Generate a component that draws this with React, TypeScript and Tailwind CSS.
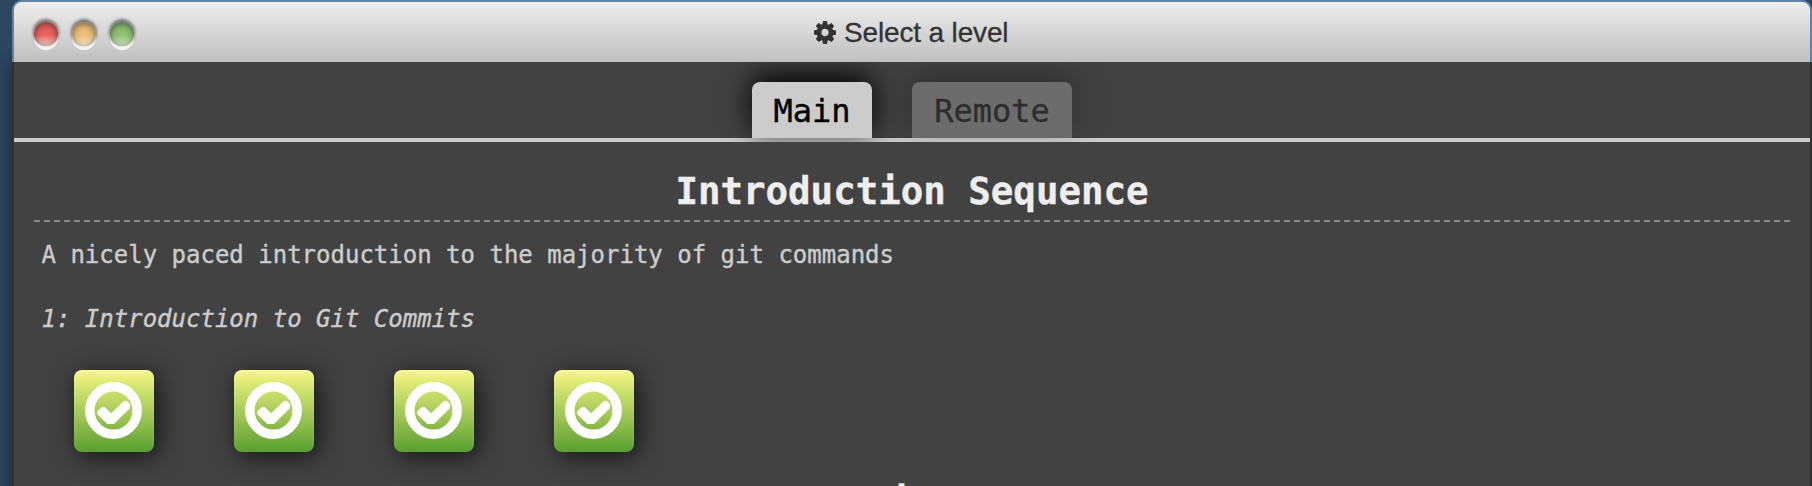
const levels = [1, 2, 3, 4];

function CogIcon() {
  return (
    <svg viewBox="128 128 1536 1536" className="mr-[8px] h-[23px] w-[22px] shrink-0 fill-[#333]" preserveAspectRatio="none">
      <path d="M1152 896q0-106-75-181t-181-75-181 75-75 181 75 181 181 75 181-75 75-181zm512-109v222q0 12-8 23t-20 13l-185 28q-19 54-39 91 35 50 107 138 10 12 10 25t-9 23q-27 37-99 108t-94 71q-12 0-26-9l-138-108q-44 23-91 38-16 136-29 186-7 28-36 28h-222q-14 0-24.500-8.500t-11.500-21.500l-28-184q-49-16-90-37l-141 107q-10 9-25 9-14 0-25-11-126-114-165-168-7-10-7-23 0-12 8-23 15-21 51-66.500t54-70.500q-27-50-41-99l-183-27q-13-2-21-12.500t-8-23.500v-222q0-12 8-23t19-13l186-28q14-46 39-92-40-57-107-138-10-12-10-24 0-10 9-23 26-36 98.500-107.500t94.500-71.500q13 0 26 10l138 107q44-23 91-38 16-136 29-186 7-28 36-28h222q14 0 24.500 8.500t11.500 21.500l28 184q49 16 90 37l142-107q9-9 24-9 13 0 25 10 129 119 165 170 7 8 7 22 0 12-8 23-15 21-51 66.500t-54 70.500q26 50 41 98l183 28q13 2 21 12.500t8 23.500z" />
    </svg>
  );
}

function Solved() {
  return (
    <div className="flex h-[82px] w-20 items-center justify-center rounded-[8px] bg-linear-to-b from-[#f7f783] to-[#57a030] shadow-[4px_4px_24px_rgba(0,0,0,0.7),inset_0_2px_2px_rgba(255,255,255,0.3)]">
      <svg viewBox="0 0 58 58" className="h-[58px] w-[58px]">
        <circle cx="28.500" cy="28.500" r="23.700" fill="none" stroke="#fff" strokeWidth="9.500" />
        <path
          d="M13 30.300 L17.300 26 L19.300 26 L26 32.800 L39.300 20 L41.300 20 L44.300 23 L44.300 25.300 L28.500 41 L22.800 41 L13 31.500 Z"
          fill="#fff"
          stroke="#fff"
          strokeWidth="2"
          strokeLinejoin="round"
        />
      </svg>
    </div>
  );
}

function Heading({ children }: { children: string }) {
  return (
    <h2 className="mx-5 h-[66px] border-b-2 border-dashed border-[#888] pt-[13px] text-center text-[37.440px] leading-[44px] font-bold text-[#eee] [-webkit-text-stroke:0.4px_#eee]">
      {children}
    </h2>
  );
}

export default function App() {
  return (
    <div className="h-[486px] overflow-hidden bg-[#2d4761] pl-3 font-['DejaVu_Sans_Mono',monospace]">
      <div className="flex h-[486px] w-[1800px] flex-col rounded-t-[12px] shadow-[0_60px_20px_rgba(0,0,0,0.5)]">
        <div className="flex h-[62px] shrink-0 items-center rounded-t-[10px] border-x-2 border-t-2 border-[#6483a2] bg-linear-to-b from-[#eee] to-[#bfbfbf] pl-5">
          <div className="flex gap-[14px]">
            <span className="mt-1 h-6 w-6 rounded-full bg-linear-to-b from-[#e8645d] from-55% to-[#ecc] shadow-[0_-2px_3px_1px_#777,0_4px_0_#f5f5f5,inset_0_2px_7px_rgba(0,0,0,0.5)]" />
            <span className="mt-1 h-6 w-6 rounded-full bg-linear-to-b from-[#eec17c] from-55% to-[#f8e4c8] shadow-[0_-2px_3px_1px_#777,0_4px_0_#f5f5f5,inset_0_2px_7px_rgba(0,0,0,0.5)]" />
            <span className="mt-1 h-6 w-6 rounded-full bg-linear-to-b from-[#8fc274] from-55% to-[#cfe4c4] shadow-[0_-2px_3px_1px_#777,0_4px_0_#f5f5f5,inset_0_2px_7px_rgba(0,0,0,0.5)]" />
          </div>
          <div className="ml-[680px] flex items-center font-['Liberation_Sans',sans-serif] text-[28px] leading-[60px] tracking-[-0.150px] text-[#333]">
            <CogIcon />
            <span className="pt-[2px] [-webkit-text-stroke:0.3px_#333]">Select a level</span>
          </div>
        </div>
        <div className="min-h-0 flex-1 overflow-hidden border-x-2 border-[#303030] bg-[#424242]">
          <div className="overflow-hidden">
            <div className="flex h-20 items-end justify-center gap-10 border-b-4 border-[#ccc]">
              <div className="h-14 w-[120px] rounded-t-[8px] bg-[#ccc] text-center text-[32px] leading-[59px] text-black shadow-[0_-7px_30px_#000] [-webkit-text-stroke:0.4px_#000]">Main</div>
              <div className="h-14 w-40 rounded-t-[8px] bg-[#ccc] text-center text-[32px] leading-[59px] text-black opacity-30 shadow-[0_-7px_30px_#000] [-webkit-text-stroke:0.4px_#000]">Remote</div>
            </div>
          </div>
          <div className="h-[14px]" />
          <Heading>Introduction Sequence</Heading>
          <p className="mt-[17px] ml-[27.500px] text-[24px] leading-8 text-[#ccc] [-webkit-text-stroke:0.4px_#ccc]">A nicely paced introduction to the majority of git commands</p>
          <p className="mt-8 ml-[27.500px] text-[24px] leading-8 text-[#ccc] italic [-webkit-text-stroke:0.4px_#ccc]">1: Introduction to Git Commits</p>
          <div className="mt-[35px] ml-[60px] flex gap-20">
            {levels.map((level) => (
              <Solved key={level} />
            ))}
          </div>
          <div className="h-[14px]" />
          <Heading>Ramping Up</Heading>
        </div>
      </div>
    </div>
  );
}
